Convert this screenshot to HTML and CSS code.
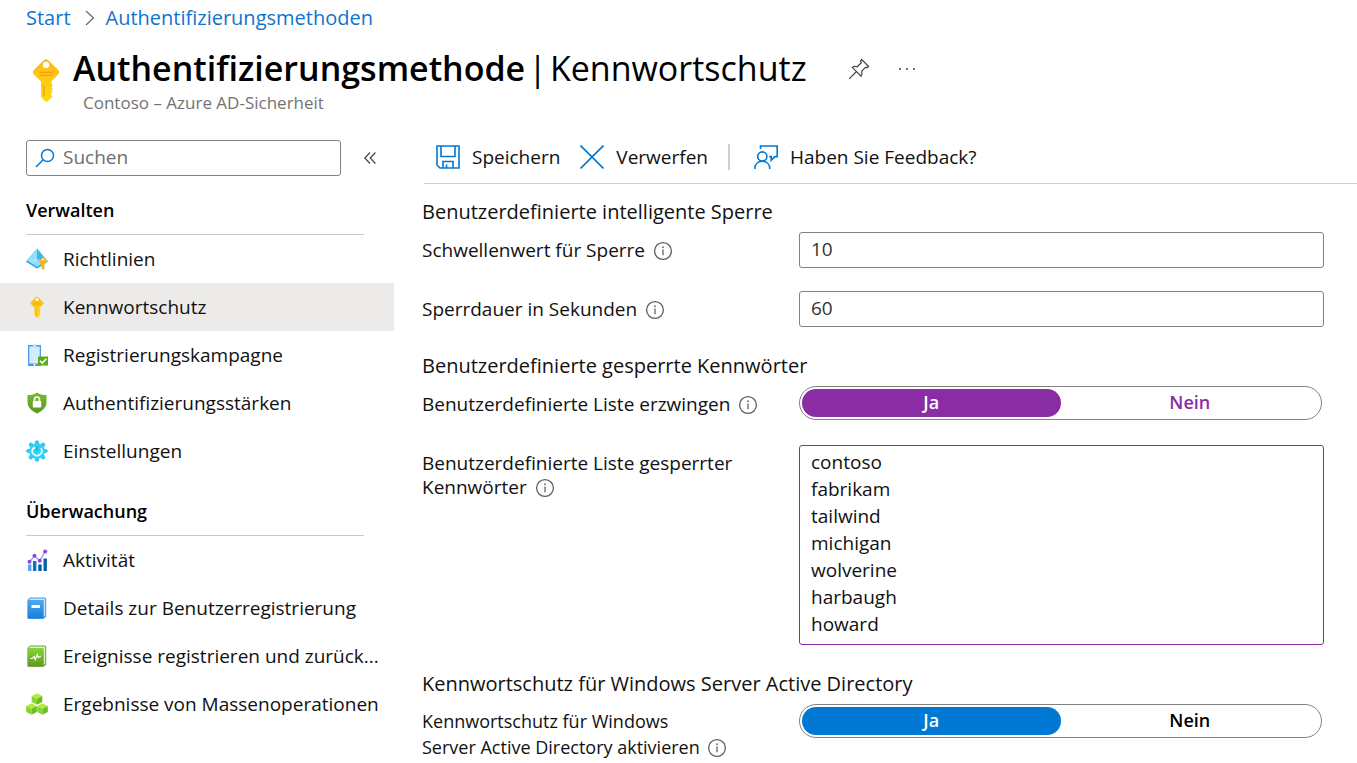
FILE: index.html
```html
<!DOCTYPE html>
<html lang="de">
<head>
<meta charset="utf-8">
<title>Authentifizierungsmethode | Kennwortschutz</title>
<link rel="stylesheet" href="styles.css">
</head>
<body>
<svg class="defs" aria-hidden="true">
  <defs>
    <linearGradient id="gold" x1="0" y1="0" x2="0" y2="1"><stop offset="0" stop-color="#feb91a"/><stop offset="1" stop-color="#ffda10"/></linearGradient>
    <linearGradient id="blueBook" x1="0" y1="0" x2="0" y2="1"><stop offset="0" stop-color="#4fa8ee"/><stop offset="1" stop-color="#1180da"/></linearGradient>
    <linearGradient id="greenBook" x1="0" y1="0" x2="0" y2="1"><stop offset="0" stop-color="#86d633"/><stop offset="1" stop-color="#5e9624"/></linearGradient>
    <linearGradient id="shield" x1="0" y1="0" x2="0" y2="1"><stop offset="0" stop-color="#76bc2d"/><stop offset="1" stop-color="#5a9722"/></linearGradient>
    <symbol id="info" viewBox="0 0 20 20"><circle cx="10" cy="10" r="8.4" fill="none" stroke="#605e5c" stroke-width="1.3"/><path d="M10 8.6v5.6" stroke="#777" stroke-width="1.5"/><circle cx="10" cy="6.2" r="1" fill="#777"/></symbol>
    <symbol id="key" viewBox="0 0 28 44">
      <path d="M12 2.100q2-1.700 4 0L26.500 12.300q1.500 1.900 0 3.800L19.400 23.400v2.400l1.400 1.500-1.400 1.600 1.400 1.500-1.400 1.600 1.400 1.500-1.400 1.500v2.500l1 1-4.700 5q-1.200.8-2.400 0L9 39.200V23.800L1.500 16.100q-1.500-1.900 0-3.800z" fill="url(#gold)"/>
      <circle cx="14" cy="7" r="3.200" fill="#fff"/><path d="M7.500 14.300h13M7.500 17.400h13" stroke="#f79e16" stroke-width="1.200"/><path d="M12 27.500v11" stroke="#ff9c1b" stroke-width="1.400"/>
    </symbol>
  </defs>
</svg>

<header class="head">
  <nav class="crumbs" aria-label="Brotkrumen">
    <a href="#">Start</a>
    <svg class="crumb-sep" viewBox="0 0 10 16"><path d="M1 1l7.500 7L1 15"/></svg>
    <a href="#">Authentifizierungsmethoden</a>
  </nav>
  <div class="title-row">
    <svg class="title-key"><use href="#key"/></svg>
    <div class="title-text">
      <h1><strong>Authentifizierungsmethode</strong> <span>|</span> <span>Kennwortschutz</span></h1>
      <p>Contoso – Azure AD-Sicherheit</p>
    </div>
    <button class="icon-btn" aria-label="Anheften"><svg width="22" height="22" viewBox="0 0 22 22" class="line-dark"><path d="M13.600 1.500l7 7-1.500 1.200-1.500-.6-4 4.200c.7 1.800.5 3.500-.5 4.900L4.300 9.400c1.400-1.100 3.200-1.300 4.900-.6l4.100-4-.8-1.700zM8.500 13.500L1.200 20.800"/></svg></button>
    <button class="icon-btn" aria-label="Weitere Aktionen"><svg width="18" height="22" viewBox="0 0 18 22"><g fill="#444"><circle cx="2" cy="11" r="1"/><circle cx="9" cy="11" r="1"/><circle cx="16" cy="11" r="1"/></g></svg></button>
  </div>
</header>

<div class="layout">
  <aside class="side">
    <div class="search-row">
      <label class="search">
        <svg width="20" height="20" viewBox="0 0 20 20"><g fill="none" stroke="#0078d4" stroke-width="1.500"><circle cx="12.500" cy="7.500" r="6"/><path d="M8.200 11.800L1 19"/></g></svg>
        <input type="search" placeholder="Suchen" aria-label="Suchen">
      </label>
      <button class="icon-btn" aria-label="Menü einklappen"><svg width="12" height="12" viewBox="0 0 12 12" class="line-dark"><path d="M6 .5L.8 6 6 11.500M11.400.5L6.200 6l5.200 5.500"/></svg></button>
    </div>
    <nav>
      <h2>Verwalten</h2>
      <ul>
        <li><a href="#"><svg class="ico" viewBox="0 0 22 22"><path d="M11 .5L0 13.500 11 20.500l11-7z" fill="#50c8f0"/><path d="M11 .5v13.300L1 13z" fill="#8fdffa"/><path d="M11 .5v13.300l10-.8z" fill="#45b4ee"/><path d="M1.500 13l9.500-2 9.500 2-9.500 6z" fill="#c3f1ff" opacity=".55"/><path d="M0 13.500l1.500-.8 9.500 6.200 9.500-6.200 1.500.8-11 7z" fill="#3d9fe8"/><path d="M17 9l4.400 4.200-3 3.300v4L17 22l-1.600-1.500v-4l-2.900-3.300z" fill="#fdb515"/><circle cx="17" cy="11.500" r="1" fill="#fff"/></svg>Richtlinien</a></li>
        <li><a href="#" class="active" aria-current="page"><svg class="ico"><use href="#key"/></svg>Kennwortschutz</a></li>
        <li><a href="#"><svg class="ico" viewBox="0 0 22 22"><path d="M2 1h13v21H2z" fill="#4b9bec"/><path d="M3.300 2.500h10.400v17H3.300z" fill="#d3ebff"/><path d="M7 0h3v2.500H7z" fill="#d3ebff"/><circle cx="8.500" cy="20.700" r="1" fill="#fff"/><path d="M12 12.500h10v9H12z" fill="#5aab1d"/><path d="M14 16.700l2.300 2.300 4-4.300" fill="none" stroke="#fff" stroke-width="1.600"/></svg>Registrierungskampagne</a></li>
        <li><a href="#"><svg class="ico" viewBox="0 0 22 22"><path d="M11 .5c2.700 1.800 5.500 2.500 9.500 2.600v7.400c0 5-4.500 8.800-9.500 11-5-2.200-9.500-6-9.500-11V3.100C5.500 3 8.300 2.300 11 .5z" fill="url(#shield)"/><rect x="6.800" y="9" width="8.400" height="6.500" rx=".7" fill="#fff"/><path d="M8.500 9V7.500a2.500 2.500 0 015 0V9" fill="none" stroke="#fff" stroke-width="1.600"/></svg>Authentifizierungsstärken</a></li>
        <li><a href="#"><svg class="ico" viewBox="0 0 22 22"><g stroke="#32c8f0" stroke-width="4.200" stroke-linecap="round"><path d="M11 2.300v17.400M2.300 11h17.400M4.800 4.800l12.400 12.400M17.200 4.800L4.800 17.200"/></g><circle cx="11" cy="11" r="7.800" fill="#32d0f5"/><path d="M7.200 8.200a4.700 4.700 0 107.600 0" fill="none" stroke="#e8fbff" stroke-width="1.700"/><path d="M11 6v5" stroke="#22b0e4" stroke-width="1.700"/><path d="M5.600 8.800l3.200-2.600v3.400z" fill="#e8fbff"/></svg>Einstellungen</a></li>
      </ul>
      <h2>Überwachung</h2>
      <ul>
        <li><a href="#"><svg class="ico" viewBox="0 0 22 22"><path d="M2 15.500h3.400V22H2z" fill="#5ea0ef"/><path d="M7 12h3.400v10H7z" fill="#0078d4"/><path d="M12.300 15.500h3.400V22h-3.400z" fill="#005ba1"/><path d="M17.500 9.500h3.400V22h-3.400z" fill="#0062ad"/><path d="M3.500 12.700L8.500 7l5.200 4.800 5.500-9.300" fill="none" stroke="#b796f9" stroke-width="1.500"/><g fill="#8b49dc"><circle cx="3.500" cy="12.700" r="2"/><circle cx="8.500" cy="6.800" r="2"/><circle cx="13.700" cy="11.800" r="2"/><circle cx="19.200" cy="2.600" r="2"/></g></svg>Aktivität</a></li>
        <li><a href="#"><svg class="ico" viewBox="0 0 22 22"><path d="M4 .5h14.500q1.700 0 1.700 1.600v17.300l-2 2.100H1.500V3z" fill="#4698de"/><path d="M4 1.500h14q1.200 0 1.200 1.200v16l-2 1.800V3.200H2.800z" fill="#cce5f9"/><rect x="1.700" y="3" width="16" height="18.800" rx="1.200" fill="url(#blueBook)"/><path d="M5.500 8h8.500v3H5.500z" fill="#fff"/></svg>Details zur Benutzerregistrierung</a></li>
        <li><a href="#"><svg class="ico" viewBox="0 0 22 22"><path d="M4 .5h14.500q1.700 0 1.700 1.600v17.300l-2 2.100H1.500V3z" fill="#6aa832"/><path d="M4 1.500h14q1.200 0 1.200 1.200v16l-2 1.800V3.200H2.800z" fill="#dff0cc"/><rect x="1.700" y="3" width="16" height="18.800" rx="1.200" fill="url(#greenBook)"/><path d="M4 13.500l2.500-.3 1.600-1.600 1.200 3.200 2-5.300 1 3 2.700-1.500" fill="none" stroke="#fff" stroke-width="1.100"/></svg>Ereignisse registrieren und zurück...</a></li>
        <li><a href="#"><svg class="ico" viewBox="0 0 22 22"><g id="cube"><path d="M11 .3l5.300 2.700L11 5.700 5.700 3z" fill="#b4ec36"/><path d="M5.700 3L11 5.700v6L5.700 9z" fill="#86d633"/><path d="M16.300 3L11 5.700v6L16.300 9z" fill="#6abe20"/></g><use href="#cube" x="-5.500" y="10"/><use href="#cube" x="5.500" y="10"/></svg>Ergebnisse von Massenoperationen</a></li>
      </ul>
    </nav>
  </aside>

  <main class="main">
    <div class="toolbar">
      <button><svg width="24" height="24" viewBox="0 0 24 24" class="line-blue"><path d="M1 1h22v22H4l-3-3zM5 1v10.500h14V1M7 23v-6.500h10V23M10.500 23v-3.500"/></svg>Speichern</button>
      <button><svg width="24" height="24" viewBox="0 0 24 24" class="line-blue"><path d="M.5.5l23 23M23.500.5l-23 23"/></svg>Verwerfen</button>
      <span class="divider"></span>
      <button><svg width="24" height="24" viewBox="0 0 24 24" class="line-blue"><circle cx="8.300" cy="11.500" r="4.600"/><path d="M.8 24c0-5 3.300-7.800 7.500-7.800s7.500 2.800 7.500 7.800M6.500 4V1h16.700v10.600h-2.300l-3.700 3.700v-3.700h-2"/></svg>Haben Sie Feedback?</button>
    </div>

    <form class="form">
      <h3>Benutzerdefinierte intelligente Sperre</h3>
      <div class="row">
        <div class="name"><label for="threshold">Schwellenwert für Sperre</label> <button type="button" class="info" aria-label="Info"><svg><use href="#info"/></svg></button></div>
        <input id="threshold" class="box" type="text" value="10">
      </div>
      <div class="row">
        <div class="name"><label for="duration">Sperrdauer in Sekunden</label> <button type="button" class="info" aria-label="Info"><svg><use href="#info"/></svg></button></div>
        <input id="duration" class="box" type="text" value="60">
      </div>
      <h3>Benutzerdefinierte gesperrte Kennwörter</h3>
      <div class="row">
        <div class="name"><span id="enforce">Benutzerdefinierte Liste erzwingen</span> <button type="button" class="info" aria-label="Info"><svg><use href="#info"/></svg></button></div>
        <div class="toggle edited" role="radiogroup" aria-labelledby="enforce">
          <label><input type="radio" name="enforce" checked><span>Ja</span></label>
          <label><input type="radio" name="enforce"><span>Nein</span></label>
        </div>
      </div>
      <div class="row">
        <div class="name"><label for="banned">Benutzerdefinierte Liste gesperrter<br>Kennwörter</label> <button type="button" class="info" aria-label="Info"><svg><use href="#info"/></svg></button></div>
        <textarea id="banned" class="box edited" rows="7">contoso
fabrikam
tailwind
michigan
wolverine
harbaugh
howard</textarea>
      </div>
      <h3>Kennwortschutz für Windows Server Active Directory</h3>
      <div class="row">
        <div class="name compact"><span id="onprem">Kennwortschutz für Windows<br>Server Active Directory aktivieren</span> <button type="button" class="info" aria-label="Info"><svg><use href="#info"/></svg></button></div>
        <div class="toggle" role="radiogroup" aria-labelledby="onprem">
          <label><input type="radio" name="onprem" checked><span>Ja</span></label>
          <label><input type="radio" name="onprem"><span>Nein</span></label>
        </div>
      </div>
    </form>
  </main>
</div>
</body>
</html>
```

FILE: styles.css
```css
* { box-sizing: border-box; }
body {
  margin: 0;
  background: #fff;
  color: #111;
  font: 19px/24px "Open Sans", "Noto Sans", sans-serif;
}
button, input, textarea { font: inherit; color: inherit; }
button { border: 0; padding: 0; background: none; cursor: pointer; }
a { color: inherit; text-decoration: none; }
h1, h2, h3, p, ul { margin: 0; padding: 0; }
ul { list-style: none; }
svg { flex: none; }
.defs { position: absolute; width: 0; height: 0; }
.line-dark { fill: none; stroke: #444; stroke-width: 1.2; }
.line-blue { fill: none; stroke: #0078d4; stroke-width: 1.6; }

.head { padding: 6px 26px 0; }
.crumbs { display: flex; align-items: center; color: #0f73cd; font-size: 20px; }
.crumb-sep { width: 10px; height: 16px; margin: 0 11px 0 14px; fill: none; stroke: #666; stroke-width: 1.2; }
.title-row { display: flex; align-items: flex-start; margin-top: 14px; }
.title-key { width: 28px; height: 44px; margin: 14px 13px 0 6px; }
h1 { display: flex; gap: 3px; font-size: 34px; line-height: 48px; font-weight: 400; color: #000; white-space: nowrap; }
h1 strong { font-weight: 600; }
.title-text p { padding-left: 10px; color: #737373; font-size: 17px; line-height: 22px; }
.icon-btn { display: flex; align-items: center; justify-content: center; }
.title-row .icon-btn { height: 50px; margin-left: 28px; }
.title-row .icon-btn:nth-of-type(1) { margin-left: 41px; }

.layout { display: flex; align-items: flex-start; margin-top: 16px; }
.side { flex: none; width: 394px; padding-top: 10px; }
.search-row { display: flex; gap: 23px; padding-left: 26px; }
.search {
  display: flex; align-items: center; gap: 8px;
  width: 315px; height: 36px; padding: 0 8px;
  border: 1px solid #828282; border-radius: 3px;
}
.search input { flex: 1; min-width: 0; border: 0; padding: 0 0 2px; outline: 0; background: none; }
.search input::placeholder { color: #6e6e6e; opacity: 1; }
.side h2 {
  margin: 22px 30px 0 26px; padding-bottom: 12px;
  border-bottom: 1px solid #c8c8c8;
  font-size: 18px; line-height: 24px; font-weight: 600; color: #000;
}
.side ul + h2 { margin-top: 24px; }
.side li a { display: flex; align-items: center; gap: 15px; height: 48px; padding-left: 26px; white-space: nowrap; }
.side li a.active { background: #edebe9; }
.ico { width: 22px; height: 22px; }

.main { flex: 1; min-width: 0; padding-left: 28px; }
.toolbar {
  display: flex; align-items: center; height: 54px; margin-left: 2px; padding-left: 12px;
  border-bottom: 1px solid #d2d0ce;
}
.toolbar button { display: flex; align-items: center; gap: 12px; margin-right: 20px; white-space: nowrap; }
.divider { width: 2px; height: 26px; margin-right: 24px; background: #d2d0ce; }

.form { padding: 16px 33px 0 0; }
h3 { font-size: 20px; line-height: 24px; font-weight: 400; margin-bottom: 8px; }
.row { display: grid; grid-template-columns: 377px 1fr; grid-auto-rows: minmax(36px, auto); align-items: start; margin-bottom: 23px; }
.row + h3 { margin-top: 27px; }
.row:last-child { margin-bottom: 0; }
.name { padding-top: 6px; }
.name.compact { padding-top: 4px; font-size: 18px; line-height: 26px; }
.info { display: inline-block; width: 20px; height: 20px; margin-left: 3px; vertical-align: -4px; }
.info svg { display: block; width: 20px; height: 20px; }
.box { width: 100%; height: 36px; padding: 0 11px 2px; border: 1px solid #828282; border-radius: 3px; background: #fff; color: #333; outline: 0; }
textarea.box { display: block; height: auto; padding: 3px 11px 6px; line-height: 27px; resize: none; overflow: hidden; color: #111; }
.box.edited { border-color: #8a2da5; }
.toggle {
  display: grid; grid-template-columns: 1fr 1fr; margin-right: 2px; padding: 2px;
  border: 1px solid #828282; border-radius: 17px;
  font-size: 18px; font-weight: 600; color: #000; text-align: center;
}
.toggle input { position: absolute; opacity: 0; }
.toggle span { display: block; border-radius: 14px; padding-bottom: 2px; line-height: 26px; }
.toggle.edited { color: #8a2da5; }
.toggle input:checked + span { background: #0078d4; color: #fff; }
.toggle.edited input:checked + span { background: #8a2da5; }
```
